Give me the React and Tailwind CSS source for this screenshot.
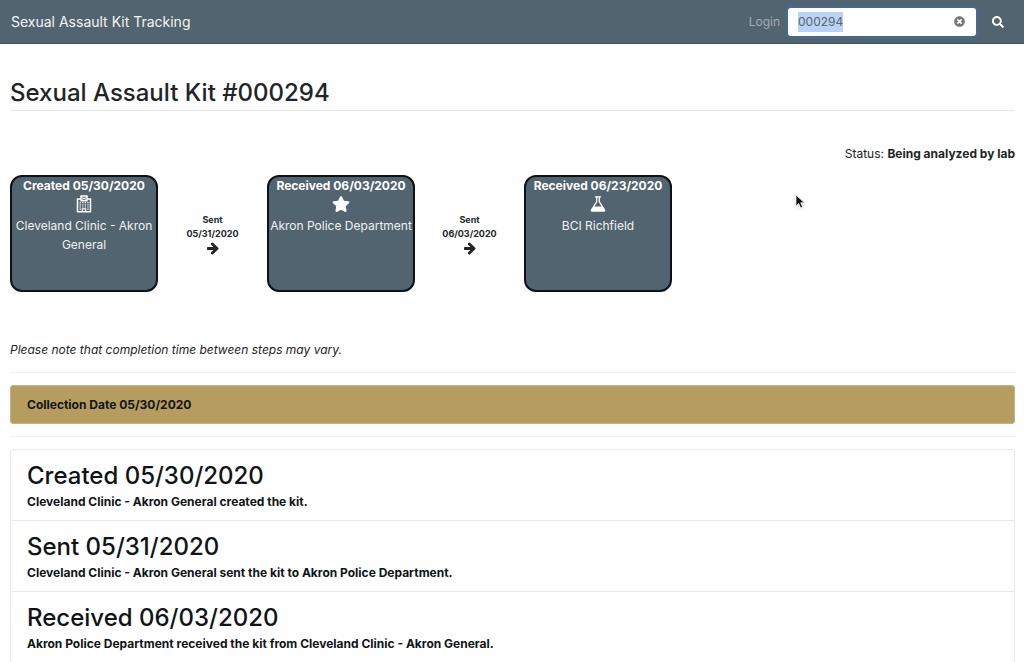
import React, { useEffect, useRef, useState } from "react";
import { FaSearch, FaStar, FaTimesCircle } from "react-icons/fa";

function HospitalIcon() {
  return (
    <svg viewBox="0 0 16 18" className="h-[18px] w-4" fill="none" stroke="currentColor" aria-hidden="true">
      <path d="M5 4H1.5v12.800h13V4H11M5 5.700V1h6v4.700z" strokeWidth="1.500" strokeLinejoin="round" />
      <path d="M6.800 2.200v2.600M9.200 2.200v2.600M6.800 3.500h2.400" strokeWidth=".9" />
      <path d="M3.600 7.600h9M3.600 9.800h9M3.600 12h9" strokeWidth="1.200" strokeDasharray="1.300 1.270" />
      <path d="M3.600 14.200h1.300M11.300 14.200h1.300" strokeWidth="1.200" />
      <path d="M6.300 16.500v-2.600h3.400v2.600" strokeWidth="1.100" />
    </svg>
  );
}

function FlaskIcon() {
  return (
    <svg viewBox="0 0 1792 1792" className="size-[18px]" fill="currentColor" aria-hidden="true">
      <path d="M1591 1448q56 89 21.500 152.500t-140.500 63.500h-1152q-106 0-140.500-63.500t21.500-152.500l503-793v-399h-64q-26 0-45-19t-19-45 19-45 45-19h512q26 0 45 19t19 45-19 45-45 19h-64v399zm-779-725l-272 429h712l-272-429-20-31v-436h-128v436z" />
    </svg>
  );
}

function ArrowIcon() {
  return (
    <svg viewBox="0 0 1536 1792" className="h-[14px] w-3" fill="currentColor" aria-hidden="true">
      <path d="M1472 960q0 54-37 91l-651 651q-39 37-91 37-51 0-90-37l-75-75q-38-38-38-91t38-91l293-293h-704q-52 0-84.500-37.500t-32.500-90.500v-128q0-53 32.500-90.500t84.500-37.500h704l-293-294q-38-36-38-90t38-90l75-75q38-38 90-38 53 0 91 38l651 651q37 35 37 90z" />
    </svg>
  );
}

const steps = [
  { title: "Created 05/30/2020", place: "Cleveland Clinic - Akron General", Icon: HospitalIcon, sent: "05/31/2020" },
  { title: "Received 06/03/2020", place: "Akron Police Department", Icon: FaStar, sent: "06/03/2020" },
  { title: "Received 06/23/2020", place: "BCI Richfield", Icon: FlaskIcon },
];

const events = [
  { title: "Created 05/30/2020", text: "Cleveland Clinic - Akron General created the kit." },
  { title: "Sent 05/31/2020", text: "Cleveland Clinic - Akron General sent the kit to Akron Police Department." },
  { title: "Received 06/03/2020", text: "Akron Police Department received the kit from Cleveland Clinic - Akron General." },
];

function Header() {
  const [query, setQuery] = useState("000294");
  const input = useRef(null);
  useEffect(() => {
    input.current.focus();
    input.current.select();
  }, []);
  return (
    <header className="flex h-11 items-center justify-between border-b border-[#43525e] bg-[#526470] pr-3 pl-[11px]">
      <a href="#" className="text-sm leading-6 text-[#f4f5f6]">Sexual Assault Kit Tracking</a>
      <form className="flex items-center" onSubmit={(e) => e.preventDefault()}>
        <a href="#" className="mr-2 text-xs leading-5 text-[#a3aab0]">Login</a>
        <div className="flex h-7 w-[188px] items-center rounded-[3px] bg-white pr-[11px] pl-[10px] ring-3 ring-[#4a6986]">
          <input
            ref={input}
            type="text"
            aria-label="Kit number"
            value={query}
            onChange={(e) => setQuery(e.target.value)}
            className="h-5 min-w-0 flex-1 text-xs leading-5 text-[#5c646b] caret-transparent outline-none selection:bg-[#b9d3f6] selection:text-[#5c646b]"
          />
          <button type="button" aria-label="Clear" onClick={() => setQuery("")} className="text-[11px] text-[#757778]">
            <FaTimesCircle />
          </button>
        </div>
        <button type="submit" aria-label="Search" className="ml-2 flex size-7 items-center justify-center text-xs text-white">
          <FaSearch />
        </button>
      </form>
    </header>
  );
}

function Step({ title, place, Icon, sent }) {
  return (
    <>
      <li className="flex h-[117px] w-[148px] flex-col items-center rounded-xl border-2 border-[#0f1214] bg-[#526470] text-center text-xs leading-[19px] text-[#f1f2f3]">
        <strong className="leading-[18px] font-bold whitespace-nowrap text-white">{title}</strong>
        <span className="flex h-[21px] items-start text-lg text-white"><Icon /></span>
        <span>{place}</span>
      </li>
      {sent && (
        <li className="flex w-[109px] flex-col items-center pt-px text-[9px] leading-[14px] font-bold text-[#212529]">
          <span>Sent</span>
          <span>{sent}</span>
          <ArrowIcon />
        </li>
      )}
    </>
  );
}

export default function App() {
  return (
    <div className="min-h-screen bg-[#fefefe] font-['Inter','Liberation_Sans',sans-serif] text-xs leading-5 text-[#212529]">
      <Header />
      <main className="pr-[9px] pl-[10px]">
        <h1 className="border-b border-[#e5e6e6] pt-[33px] pb-px text-2xl font-medium">Sexual Assault Kit #000294</h1>
        <p className="mt-[33px] text-right">
          Status: <strong className="font-bold">Being analyzed by lab</strong>
        </p>
        <ol className="mt-[11px] flex items-center">
          {steps.map((step) => <Step key={step.title} {...step} />)}
        </ol>
        <p className="mt-12 italic">Please note that completion time between steps may vary.</p>
        <hr className="my-3 border-[#eeefef]" />
        <div className="rounded-[3px] border border-[#c3b287] bg-[#b69c5f] px-4 py-[9px] leading-[19px] font-bold text-[#101417]">
          Collection Date 05/30/2020
        </div>
        <hr className="my-3 border-[#eeefef]" />
        <ul className="divide-y divide-[#e9eaea] rounded-t-[3px] border border-[#e9eaea] text-[#101417]">
          {events.map((event) => (
            <li key={event.title} className="px-4 pt-[10px] pb-2">
              <h2 className="text-2xl font-medium">{event.title}</h2>
              <p className="font-bold">{event.text}</p>
            </li>
          ))}
        </ul>
      </main>
      <svg className="pointer-events-none absolute top-[194px] left-[795px] h-4 w-3 drop-shadow-sm" viewBox="0 0 12 16" aria-hidden="true">
        <path d="M1 1v11l2.7-2.5 1.9 4.3 2-.9-1.9-4.1h3.7z" fill="#111" stroke="#fff" strokeWidth=".7" />
      </svg>
    </div>
  );
}
